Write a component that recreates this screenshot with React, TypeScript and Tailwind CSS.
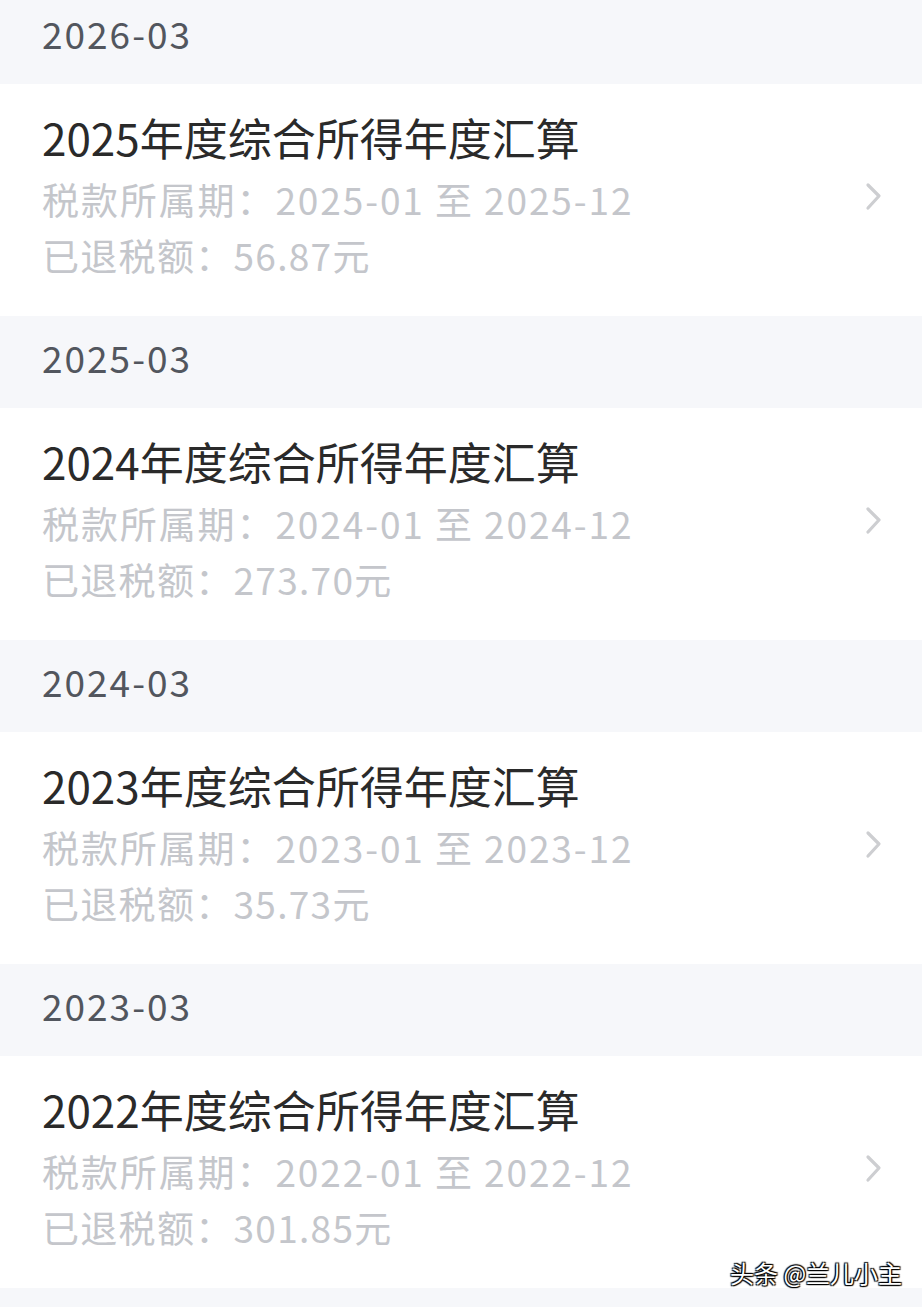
import React from "react";

const items = [
  { month: "2026-03", year: "2025", amount: "56.87" },
  { month: "2025-03", year: "2024", amount: "273.70" },
  { month: "2024-03", year: "2023", amount: "35.73" },
  { month: "2023-03", year: "2022", amount: "301.85" },
];

function Chevron() {
  return (
    <svg width="20" height="30" viewBox="0 0 20 30" fill="none">
      <path d="M4 3 L15 14 L4 26" stroke="#cdced1" strokeWidth="3.2" strokeLinecap="round" strokeLinejoin="round" />
    </svg>
  );
}

export default function App() {
  return (
    <div
      className="relative w-[922px] h-[1307px] overflow-hidden bg-[#f6f7fa]"
      style={{ fontFamily: '"Noto Sans CJK SC", "Noto Sans", sans-serif' }}
    >
      <div className="-mt-[8px] flex flex-col">
        {items.map((it) => (
          <div key={it.month} className="flex flex-col">
            <div className="h-[92px] flex items-center pb-[8px] pl-[42px] text-[37px] tracking-[2px] text-[#52565e] bg-[#f6f7fa]">
              {it.month}
            </div>
            <div className="h-[232px] bg-white flex pl-[42px] pr-[38px]">
              <div className="flex-1 flex flex-col pt-[25px]">
                <div className="leading-[56px] text-[44px] text-[#2a2a2a]">
                  {it.year}年度综合所得年度汇算
                </div>
                <div className="mt-[6px] leading-[56px] text-[37px] tracking-[1.9px] text-[#c4c6cb]">
                  税款所属期：{it.year}-01 至 {it.year}-12
                </div>
                <div className="leading-[56px] text-[37px] tracking-[1.3px] text-[#c4c6cb]">
                  已退税额：{it.amount}元
                </div>
              </div>
              <div className="self-center -mt-[6px]">
                <Chevron />
              </div>
            </div>
          </div>
        ))}
      </div>
      <div
        className="absolute left-[730px] top-[1257px] text-[24px] text-white leading-[32px]"
        style={{ textShadow: "1px 1px 1px #000, -1px -1px 1px #000, 1px -1px 1px #000, -1px 1px 1px #000" }}
      >
        头条 @兰儿小主
      </div>
    </div>
  );
}
